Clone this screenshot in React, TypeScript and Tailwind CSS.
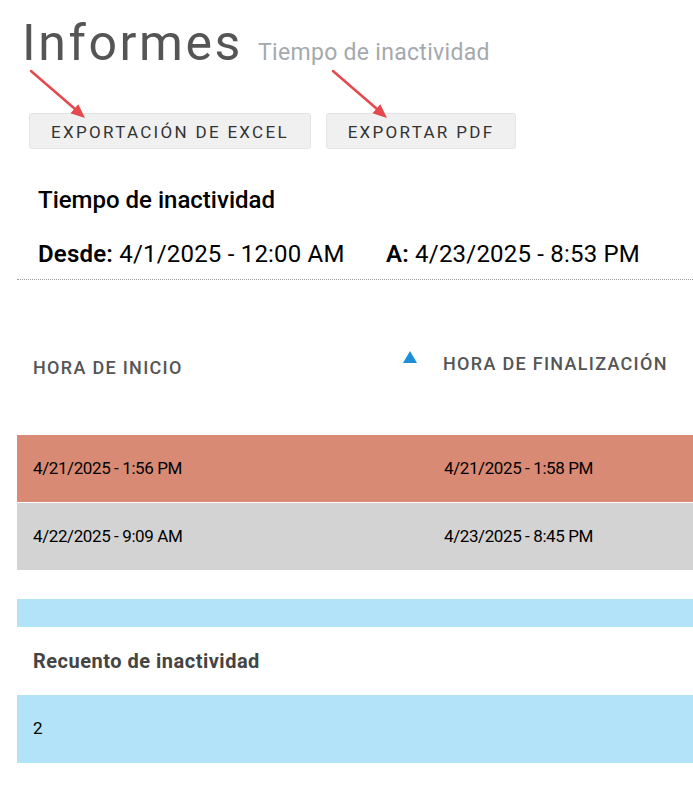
import React from "react";

const font = { fontFamily: "Roboto, 'Noto Sans', sans-serif" };

function Arrow() {
  return (
    <svg width="60" height="54" viewBox="0 0 60 54">
      <line x1="3" y1="3" x2="47" y2="41" stroke="#e5484d" strokeWidth="2.5" strokeLinecap="round" />
      <polygon points="57,50 42.5,45.3 50.3,36.3" fill="#e5484d" />
    </svg>
  );
}

export default function App() {
  return (
    <div className="w-[693px] h-[791px] bg-white text-black overflow-hidden" style={font}>
      <div className="pl-[22px] pt-[14px] flex items-baseline gap-[15px]">
        <h1 className="text-[50px] leading-[58px] tracking-[2.6px] text-[#555555] font-normal">Informes</h1>
        <span className="text-[23px] tracking-[0.3px] text-[#a4a9ae]">Tiempo de inactividad</span>
      </div>
      <div className="relative pl-[29px] pt-[41px] flex gap-[15px]">
        <div className="absolute left-[28px] top-[-4px]"><Arrow /></div>
        <div className="absolute left-[330px] top-[-4px]"><Arrow /></div>
        <button className="h-[36px] w-[282px] pt-[4px] rounded-[3px] bg-[#f0f0f0] border border-[#e4e4e4] text-[17px] tracking-[2.3px] text-[#333333]">
          EXPORTACIÓN DE EXCEL
        </button>
        <button className="h-[36px] w-[190px] pt-[4px] rounded-[3px] bg-[#f0f0f0] border border-[#e4e4e4] text-[17px] tracking-[2.3px] text-[#333333]">
          EXPORTAR PDF
        </button>
      </div>
      <div className="pl-[38px] pt-[36px] text-[24px] font-medium leading-[30px]">Tiempo de inactividad</div>
      <div className="pl-[38px] pt-[24px] text-[24px] leading-[30px] flex tracking-[0.2px]">
        <span className="w-[348px]"><b className="font-semibold">Desde:</b> 4/1/2025 - 12:00 AM</span>
        <span><b className="font-semibold">A:</b> 4/23/2025 - 8:53 PM</span>
      </div>
      <div className="ml-[17px] mt-[10px] border-t border-dotted border-[#999999]" />
      <div className="ml-[17px] h-[155px] flex text-[18px] font-medium text-[#555555] tracking-[1.3px]">
        <div className="w-[386px] pl-[16px] pt-[74px]">HORA DE INICIO</div>
        <div className="flex pt-[70px]">
          <svg width="14" height="12" viewBox="0 0 14 12" className="mt-[1px]"><polygon points="7,0 14,12 0,12" fill="#1a8fd6" /></svg>
          <span className="ml-[26px]">HORA DE FINALIZACIÓN</span>
        </div>
      </div>
      <div className="ml-[17px] flex flex-col gap-[1px] text-[17px] tracking-[-0.4px]">
        <div className="h-[67px] bg-[#d98a74] flex items-center">
          <span className="w-[427px] pl-[16px]">4/21/2025 - 1:56 PM</span>
          <span>4/21/2025 - 1:58 PM</span>
        </div>
        <div className="h-[67px] bg-[#d3d3d3] flex items-center">
          <span className="w-[427px] pl-[16px]">4/22/2025 - 9:09 AM</span>
          <span>4/23/2025 - 8:45 PM</span>
        </div>
      </div>
      <div className="ml-[17px] mt-[29px] h-[28px] bg-[#b3e3f9]" />
      <div className="ml-[17px] h-[68px] pl-[16px] flex items-center text-[20px] font-bold tracking-[0.5px] text-[#444444]">Recuento de inactividad</div>
      <div className="ml-[17px] h-[68px] pl-[16px] flex items-center bg-[#b3e3f9] text-[17px]">2</div>
    </div>
  );
}
